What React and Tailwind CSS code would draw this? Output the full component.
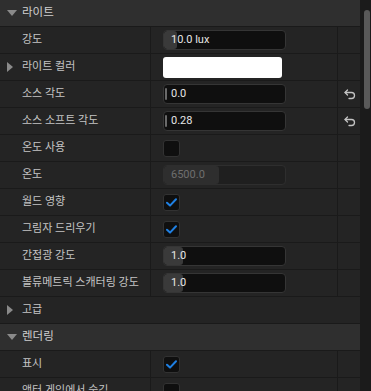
import React from "react";

const FONT = { fontFamily: "Roboto, 'Noto Sans CJK KR', sans-serif" };

function DownTri() {
  return (
    <svg width="10" height="6" viewBox="0 0 10 6" className="block">
      <path d="M0 0 L10 0 L5 6 Z" fill="#8a8a8a" />
    </svg>
  );
}
function RightTri() {
  return (
    <svg width="6" height="10" viewBox="0 0 6 10" className="block">
      <path d="M0 0 L6 5 L0 10 Z" fill="#8a8a8a" />
    </svg>
  );
}
function Check() {
  return (
    <svg width="11" height="9" viewBox="0 0 11 9" className="block">
      <path d="M1 4.8 L4 7.6 L10 1.2" fill="none" stroke="#1f80e3" strokeWidth="2" strokeLinecap="round" strokeLinejoin="round" />
    </svg>
  );
}
function Reset() {
  return (
    <svg width="12" height="11" viewBox="0 0 12 11" className="block">
      <path d="M3.5 1 L1 3.5 L3.5 6" fill="none" stroke="#c4c4c4" strokeWidth="1.3" strokeLinecap="round" strokeLinejoin="round" />
      <path d="M1.2 3.5 H7.5 a3 3 0 0 1 0 6 H5" fill="none" stroke="#c4c4c4" strokeWidth="1.3" strokeLinecap="round" />
    </svg>
  );
}

function NumInput({ text, fill, thin }) {
  return (
    <div className="relative w-[123px] h-[20px] rounded-[4px] bg-[#0f0f0f] border border-[#353535] flex items-center overflow-hidden">
      {thin ? (
        <div className="absolute left-[1px] top-[3px] bottom-[3px] w-[2px] rounded-full bg-[#6a6a6a]" />
      ) : (
        <div className="absolute left-0 top-0 bottom-0 rounded-[3px] bg-[#3a3a3a]" style={{ width: fill }} />
      )}
      <span className="relative pl-[7px] text-[11px] text-[#e6e6e6]">{text}</span>
    </div>
  );
}

function Checkbox({ checked }) {
  return (
    <div className="w-[17px] h-[17px] rounded-[3px] bg-[#0f0f0f] border border-[#323232] flex items-center justify-center">
      {checked && <Check />}
    </div>
  );
}

function Header({ label }) {
  return (
    <div className="h-[27px] shrink-0 flex items-center bg-[#2f2f2f] border-b border-[#1a1a1a]">
      <div className="w-[22px] flex justify-center pl-[1px]">
        <DownTri />
      </div>
      <span className="text-[11.5px] text-[#d0d0d0]">{label}</span>
    </div>
  );
}

function Row({ label, arrow, children, reset }) {
  return (
    <div className="h-[27px] shrink-0 flex bg-[#242424] border-b border-[#1a1a1a]">
      <div className="w-[151px] border-r border-[#1a1a1a] flex items-center">
        <div className="w-[22px] flex justify-center pr-[3px]">{arrow && <RightTri />}</div>
        <span className="text-[11px] text-[#c4c4c4] whitespace-nowrap">{label}</span>
      </div>
      <div className="w-[187px] border-r border-[#1a1a1a] flex items-center pl-[12px]">{children}</div>
      <div className="flex-1 flex items-center justify-center pl-[1px]">{reset && <Reset />}</div>
    </div>
  );
}

export default function App() {
  return (
    <div className="w-[371px] h-[391px] overflow-hidden bg-[#1b1b1b] flex" style={FONT}>
      <div className="w-[360px] flex flex-col">
        <Header label="라이트" />
        <Row label="강도">
          <NumInput text="10.0 lux" fill="13px" />
        </Row>
        <Row label="라이트 컬러" arrow>
          <div className="w-[119px] h-[21px] rounded-[3px] bg-white" />
        </Row>
        <Row label="소스 각도" reset>
          <NumInput text="0.0" thin />
        </Row>
        <Row label="소스 소프트 각도" reset>
          <NumInput text="0.28" thin />
        </Row>
        <Row label="온도 사용">
          <Checkbox />
        </Row>
        <Row label="온도">
          <div className="relative w-[123px] h-[20px] rounded-[4px] bg-[#1f1f1f] border border-[#2e2e2e] flex items-center overflow-hidden">
            <div className="absolute left-0 top-0 bottom-0 w-[55px] rounded-[3px] bg-[#2e2e2e]" />
            <span className="relative pl-[7px] text-[11px] text-[#6f6f6f]">6500.0</span>
          </div>
        </Row>
        <Row label="월드 영향">
          <Checkbox checked />
        </Row>
        <Row label="그림자 드리우기">
          <Checkbox checked />
        </Row>
        <Row label="간접광 강도">
          <NumInput text="1.0" fill="19px" />
        </Row>
        <Row label="볼류메트릭 스캐터링 강도">
          <NumInput text="1.0" fill="19px" />
        </Row>
        <div className="h-[27px] shrink-0 flex items-center bg-[#242424] border-b border-[#1a1a1a]">
          <div className="w-[22px] flex justify-center pr-[3px]">
            <RightTri />
          </div>
          <span className="text-[11px] text-[#c4c4c4]">고급</span>
        </div>
        <Header label="렌더링" />
        <Row label="표시">
          <Checkbox checked />
        </Row>
        <Row label="액터 게임에서 숨김">
          <Checkbox />
        </Row>
      </div>
      <div className="flex-1 bg-[#1b1b1b] pt-[10px] pl-[4px]">
        <div className="w-[6px] h-[99px] rounded-full bg-[#595959]" />
      </div>
    </div>
  );
}
